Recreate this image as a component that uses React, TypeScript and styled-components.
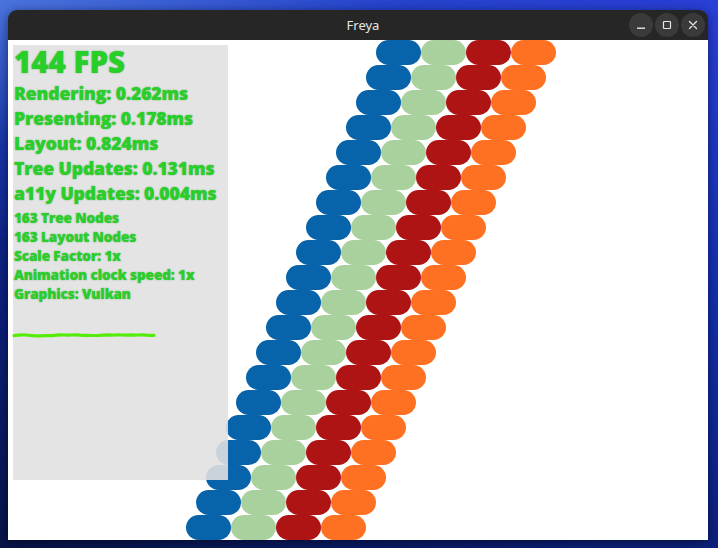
import React from "react";
import styled, { createGlobalStyle } from "styled-components";

const GlobalStyle = createGlobalStyle`
  html, body {
    margin: 0;
    padding: 0;
    width: 718px;
    height: 548px;
    overflow: hidden;
  }
  body {
    font-family: "Open Sans", "Noto Sans", sans-serif;
  }
`;

const Desktop = styled.div`
  width: 718px;
  height: 548px;
  box-sizing: border-box;
  padding: 10px 10px 8px 8px;
  background:
    linear-gradient(160deg, rgba(120, 170, 255, 0.55) 0%, rgba(60, 110, 230, 0.2) 18%, transparent 30%),
    linear-gradient(200deg, #2a3fd6 0%, #1330b0 35%, #0c1f7a 70%, #071448 100%);
  display: flex;
`;

const Window = styled.div`
  width: 700px;
  height: 530px;
  display: flex;
  flex-direction: column;
  border-radius: 9px 9px 0 0;
  overflow: hidden;
  box-shadow: 0 2px 10px rgba(0, 0, 0, 0.5);
`;

const TitleBar = styled.div`
  height: 30px;
  flex: none;
  background: #262626;
  position: relative;
  display: flex;
  align-items: center;
  justify-content: center;
`;

const Title = styled.span`
  color: #e6e6e6;
  font-family: "Noto Sans", "Open Sans", sans-serif;
  font-size: 13px;
  margin-left: 10px;
`;

const Controls = styled.div`
  position: absolute;
  right: 3px;
  top: 3px;
  display: flex;
  gap: 2px;
`;

const ControlButton = styled.div`
  width: 24px;
  height: 24px;
  border-radius: 50%;
  background: #3a3a3a;
  display: flex;
  align-items: center;
  justify-content: center;
`;

const Content = styled.div`
  flex: 1;
  background: #ffffff;
  position: relative;
  overflow: hidden;
`;

const PillRows = styled.div`
  display: flex;
  flex-direction: column;
`;

const PillRow = styled.div<{ $offset: number }>`
  display: flex;
  padding-left: ${(p) => p.$offset}px;
  height: 25px;
`;

const Pill = styled.div<{ $color: string }>`
  width: 45px;
  height: 25px;
  flex: none;
  border-radius: 12.5px;
  background: ${(p) => p.$color};
`;

const Panel = styled.div`
  position: absolute;
  left: 5px;
  top: 5px;
  width: 215px;
  height: 435px;
  background: rgba(225, 225, 225, 0.89);
  padding-left: 1px;
  box-sizing: border-box;
  color: #29cf29;
  font-weight: 800;
  text-shadow: 0 0 1.5px rgba(30, 140, 30, 0.7);
  white-space: nowrap;
`;

const Fps = styled.div`
  font-size: 29.5px;
  line-height: 34px;
  height: 36px;
`;

const Stat = styled.div`
  font-size: 17.6px;
  line-height: 25px;
  height: 25px;
  letter-spacing: -0.1px;
`;

const SmallGroup = styled.div`
  padding-top: 2px;
`;

const SmallStat = styled.div`
  font-size: 13.6px;
  line-height: 19px;
  height: 19px;
  letter-spacing: -0.1px;
`;

const Graph = styled.svg`
  display: block;
  margin-top: 27px;
  margin-left: -2px;
`;

const colors = ["#0764aa", "#a9d19d", "#af1414", "#fe7123"];

const rows = Array.from({ length: 20 }, (_, i) => 368 - i * 10);

// fps history: a thick, mostly flat trace with small bumps
const history = [
  5.6, 5.2, 4.9, 5.0, 5.4, 5.7, 5.8, 5.8, 5.7, 5.7, 5.6, 5.2, 4.9, 5.0, 5.2,
  5.0, 4.8, 5.1, 5.3, 5.4, 5.5, 5.5, 5.4, 5.1, 4.9, 5.1, 5.0, 4.8, 5.0, 5.1,
  4.9, 5.1, 5.0, 4.9, 5.2, 5.3, 5.4,
];

const graphPoints = history
  .map((y, i) => `${((i * 140) / (history.length - 1)).toFixed(1)},${y}`)
  .join(" ");

export default function App() {
  return (
    <>
      <GlobalStyle />
      <Desktop>
        <Window>
          <TitleBar>
            <Title>Freya</Title>
            <Controls>
              <ControlButton>
                <svg width="10" height="10" viewBox="0 0 10 10">
                  <rect x="1" y="7.5" width="8" height="1.4" fill="#e6e6e6" />
                </svg>
              </ControlButton>
              <ControlButton>
                <svg width="10" height="10" viewBox="0 0 10 10">
                  <rect x="1.5" y="1.5" width="7" height="7" rx="0.8" fill="none" stroke="#e6e6e6" strokeWidth="1.2" />
                </svg>
              </ControlButton>
              <ControlButton>
                <svg width="10" height="10" viewBox="0 0 10 10">
                  <path d="M1.5 1.5 L8.5 8.5 M8.5 1.5 L1.5 8.5" stroke="#e6e6e6" strokeWidth="1.3" strokeLinecap="round" />
                </svg>
              </ControlButton>
            </Controls>
          </TitleBar>
          <Content>
            <PillRows>
              {rows.map((offset, i) => (
                <PillRow key={i} $offset={offset}>
                  {colors.map((c) => (
                    <Pill key={c} $color={c} />
                  ))}
                </PillRow>
              ))}
            </PillRows>
            <Panel>
              <Fps>144 FPS</Fps>
              <Stat>Rendering: 0.262ms</Stat>
              <Stat>Presenting: 0.178ms</Stat>
              <Stat>Layout: 0.824ms</Stat>
              <Stat>Tree Updates: 0.131ms</Stat>
              <Stat>a11y Updates: 0.004ms</Stat>
              <SmallGroup>
                <SmallStat>163 Tree Nodes</SmallStat>
                <SmallStat>163 Layout Nodes</SmallStat>
                <SmallStat>Scale Factor: 1x</SmallStat>
                <SmallStat>Animation clock speed: 1x</SmallStat>
                <SmallStat>Graphics: Vulkan</SmallStat>
              </SmallGroup>
              <Graph width="144" height="10" viewBox="-2 0 144 10">
                <polyline points={graphPoints} fill="none" stroke="#55ec0a" strokeWidth="3.2" strokeLinecap="round" strokeLinejoin="round" />
              </Graph>
            </Panel>
          </Content>
        </Window>
      </Desktop>
    </>
  );
}
